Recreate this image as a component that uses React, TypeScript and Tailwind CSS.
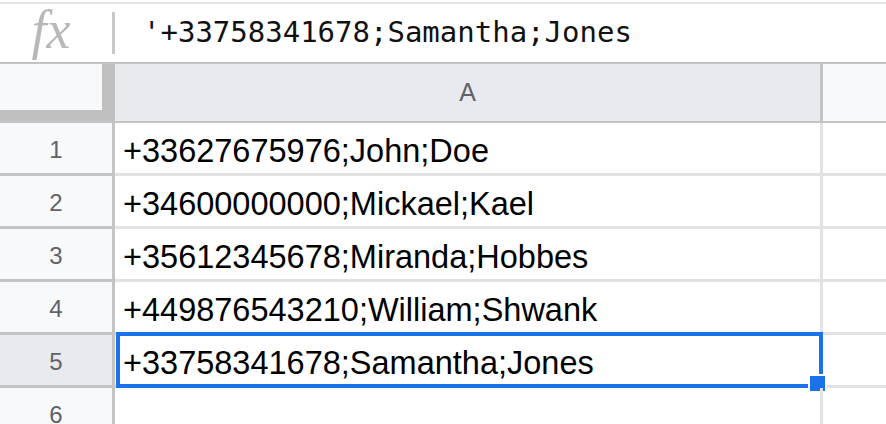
const rows = [
  "+33627675976;John;Doe",
  "+34600000000;Mickael;Kael",
  "+35612345678;Miranda;Hobbes",
  "+449876543210;William;Shwank",
  "+33758341678;Samantha;Jones",
  "",
];

const selected = 4;

export default function App() {
  return (
    <div className="w-[886px] h-[424px] overflow-hidden bg-white font-['Liberation_Sans',Arial,sans-serif]">
      {/* Formula bar */}
      <div className="mt-[2px] h-[62px] flex items-center border-t-2 border-b-2 border-t-[#e3e3e3] border-b-[#c4c4c4]">
        <div className="w-[112px] flex justify-center pr-[10px]">
          <span className="font-['Liberation_Serif',serif] italic text-[54px] leading-none text-[#b8b8b8] -mt-[6px]">
            fx
          </span>
        </div>
        <div className="w-[3px] h-[42px] bg-[#c8c8c8]" />
        <div className="pl-[28px] font-['DejaVu_Sans_Mono',monospace] text-[29px] leading-none text-[#111] -mt-[2px]">
          '+33758341678;Samantha;Jones
        </div>
      </div>

      {/* Column headers */}
      <div className="flex h-[59px] border-b-2 border-[#c4c4c4]">
        <div className="w-[115px] flex flex-col">
          <div className="flex flex-1">
            <div className="w-[102px] bg-[#f8f9fa]" />
            <div className="w-[13px] bg-[#c0c0c0]" />
          </div>
          <div className="h-[11px] bg-[#c0c0c0]" />
        </div>
        <div className="w-[705px] bg-[#e8eaed] flex items-center justify-center text-[25px] text-[#5f6368]">
          A
        </div>
        <div className="w-[3px] bg-[#c4c4c4]" />
        <div className="flex-1 bg-[#f8f9fa]" />
      </div>

      {/* Rows */}
      {rows.map((text, i) => (
        <div key={i} className="flex h-[53px]">
          <div
            className={`w-[115px] flex items-center justify-center pt-[4px] border-r-[3px] border-b-[3px] border-r-[#c4c4c4] border-b-[#c4c4c4] text-[24px] text-[#5f6368] ${
              i === selected ? "bg-[#e8eaed]" : "bg-[#f8f9fa]"
            }`}
          >
            {i + 1}
          </div>
          <div className="relative w-[708px] flex items-center pl-[8px] pt-[6px] border-r-[3px] border-b-[3px] border-[#e2e2e2] text-[32.5px] text-black whitespace-nowrap">
            {text}
            {i === selected && (
              <>
                <div className="absolute -top-[3px] left-[1px] -right-[3px] -bottom-[3px] border-[4px] border-[#1a73e8]" />
                <div className="absolute left-[693px] top-[39px] w-[19px] h-[19px] bg-[#1a73e8] border-2 border-white" />
              </>
            )}
          </div>
          <div className="flex-1 border-b-[3px] border-[#e2e2e2]" />
        </div>
      ))}
    </div>
  );
}
